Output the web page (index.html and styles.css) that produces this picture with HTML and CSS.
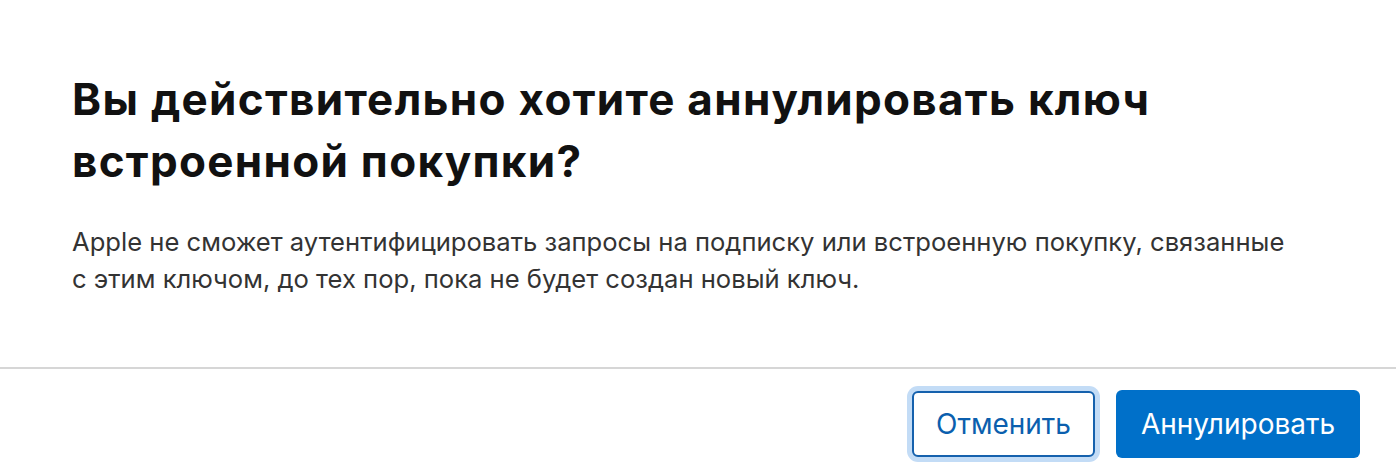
FILE: index.html
```html
<!DOCTYPE html>
<html lang="ru">
<head>
    <meta charset="UTF-8">
    <meta name="viewport" content="width=device-width, initial-scale=1.0">
    <title>Аннулировать ключ</title>
    <link rel="stylesheet" href="styles.css">
</head>
<body>
    <div class="dialog">
        <div class="dialog-body">
            <h1 class="dialog-title">Вы действительно хотите аннулировать ключ встроенной покупки?</h1>
            <p class="dialog-text">Apple не сможет аутентифицировать запросы на подписку или встроенную покупку, связанные с&nbsp;этим ключом, до тех пор, пока не будет создан новый ключ.</p>
        </div>

        <div class="dialog-footer">
            <button class="btn btn-secondary is-focused">Отменить</button>
            <button class="btn btn-primary">Аннулировать</button>
        </div>
    </div>
</body>
</html>
```

FILE: styles.css
```css
* {
    margin: 0;
    padding: 0;
    box-sizing: border-box;
}

body {
    width: 1396px;
    height: 474px;
    background: #fff;
    font-family: Inter, "Noto Sans", sans-serif;
    color: #1d1d1f;
    overflow: hidden;
}

.dialog {
    display: flex;
    flex-direction: column;
    height: 100%;
}

.dialog-body {
    padding: 68px 72px 0;
    height: 367px;
}

.dialog-title {
    max-width: 1120px;
    font-size: 44px;
    font-weight: 700;
    line-height: 62px;
    letter-spacing: 1.3px;
    color: #111;
    margin-bottom: 31px;
}

.dialog-text {
    max-width: 1240px;
    font-size: 25.6px;
    line-height: 37px;
    color: #333;
}

.dialog-footer {
    border-top: 2px solid #d6d6d6;
    display: flex;
    justify-content: flex-end;
    align-items: flex-start;
    gap: 21px;
    padding: 21px 36px 0;
}

.btn {
    height: 68px;
    border-radius: 6px;
    font-family: inherit;
    font-size: 28px;
    cursor: pointer;
}

.btn-secondary {
    width: 183px;
    height: 66px;
    margin-top: 1px;
    background: #fff;
    border: 2px solid #1561ad;
    color: #0b5fae;
}

.btn-secondary.is-focused {
    box-shadow: 0 0 0 5px #c3dcf6;
}

.btn-primary {
    width: 244px;
    background: #0070c9;
    border: none;
    color: #fff;
}
```
